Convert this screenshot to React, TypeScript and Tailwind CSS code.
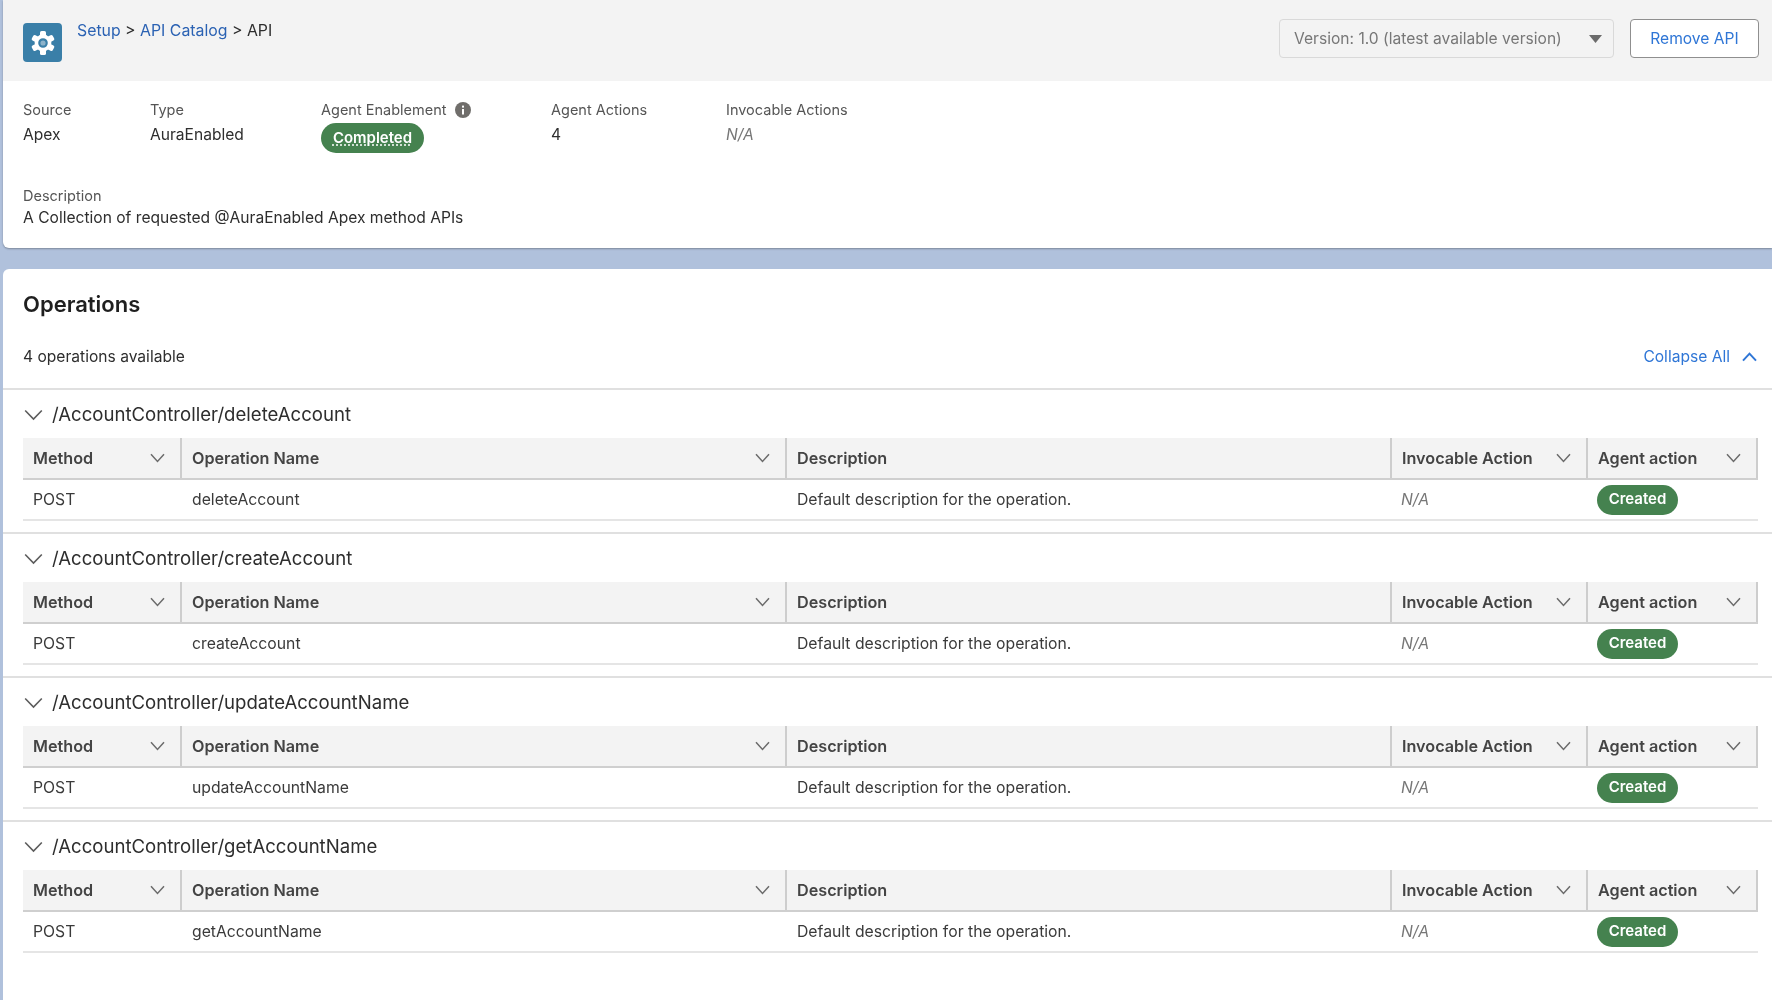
import React from 'react';

const operations = ['deleteAccount', 'createAccount', 'updateAccountName', 'getAccountName'];

function GearIcon() {
  return (
    <svg width="26" height="26" viewBox="0 0 26 26" fill="none">
      <circle cx="13" cy="13" r="8.4" fill="#fff" />
      {[0, 60, 120, 180, 240, 300].map(angle => (
        <rect key={angle} x="10" y="1" width="6" height="6" rx="1.6" fill="#fff" transform={`rotate(${angle} 13 13)`} />
      ))}
      <circle cx="13" cy="13" r="3.7" fill="#8db3ca" stroke="#3a7fa8" strokeWidth="2.2" />
    </svg>
  );
}

function Chevron({ size = 'sort' }: { size?: 'sort' | 'section' }) {
  if (size === 'section') {
    return (
      <svg width="19" height="12" viewBox="0 0 19 12" fill="none" stroke="#5c5c5c" strokeWidth="1.6">
        <path d="M1.2 1.5 9.5 10l8.3-8.5" />
      </svg>
    );
  }
  return (
    <svg width="15" height="10" viewBox="0 0 15 10" fill="none" stroke="#6b6b6b" strokeWidth="1.5">
      <path d="M1 1.2 7.5 8.4 14 1.2" />
    </svg>
  );
}

function HeaderCell({ label, width, sort = true }: { label: string; width: string; sort?: boolean }) {
  return (
    <div className={`${width} h-full flex items-center justify-between pl-[10px] pr-[15px] border-r-2 border-[#cdcdcd]`}>
      <span className="text-[16.2px] font-semibold text-[#444444]">{label}</span>
      {sort && <Chevron />}
    </div>
  );
}

function OperationSection({ name }: { name: string }) {
  return (
    <div className="border-t-2 border-[#e0e0e0] pb-[11px]">
      <div className="h-[48px] pt-[2px] flex items-center pl-[21px]">
        <Chevron size="section" />
        <span className="ml-[9px] text-[18.6px] text-[#2e2e2e]">/AccountController/{name}</span>
      </div>
      <div className="ml-[20px] w-[1735px]">
        <div className="flex h-[42px] bg-[#f3f3f3] border-b-2 border-[#cfcfcf]">
          <HeaderCell label="Method" width="w-[159px]" />
          <HeaderCell label="Operation Name" width="w-[605px]" />
          <HeaderCell label="Description" width="w-[605px]" sort={false} />
          <HeaderCell label="Invocable Action" width="w-[196px]" />
          <HeaderCell label="Agent action" width="w-[170px]" />
        </div>
        <div className="flex h-[41px] items-center border-b-2 border-[#e5e5e5] text-[15.75px] text-[#3a3a3a]">
          <div className="w-[159px] pl-[10px]">POST</div>
          <div className="w-[605px] pl-[10px]">{name}</div>
          <div className="w-[605px] pl-[10px]">Default description for the operation.</div>
          <div className="w-[196px] pl-[9px] italic text-[#777777]">N/A</div>
          <div className="w-[170px] pl-[9px]">
            <span className="inline-flex h-[30px] w-[81px] items-center justify-center rounded-full bg-[#45824f] text-[15px] font-semibold text-white">
              Created
            </span>
          </div>
        </div>
      </div>
    </div>
  );
}

function Label({ children }: { children: React.ReactNode }) {
  return <div className="text-[14.5px] text-[#555555] h-[20px] leading-[20px]">{children}</div>;
}

export default function App() {
  return (
    <div className="h-[1000px] overflow-hidden bg-[#b0c1dc] pl-[3px] font-['Inter',sans-serif] text-[15.6px] text-[#2e2e2e] blur-[0.4px]">
      {/* Top card */}
      <div className="h-[248px] bg-white rounded-bl-md shadow-[0_1px_2px_rgba(0,0,0,0.3)]">
        <div className="h-[81px] bg-[#f3f3f3] flex justify-between pl-[20px] pr-[13px]">
          <div className="flex items-start pt-[23px]">
            <div className="w-[39px] h-[39px] rounded-[4px] bg-[#3a7fa8] flex items-center justify-center">
              <GearIcon />
            </div>
            <div className="ml-[15px] -mt-[4px] text-[15.85px]">
              <a className="text-[#2b62b3]">Setup</a> &gt; <a className="text-[#2b62b3]">API Catalog</a> &gt; API
            </div>
          </div>
          <div className="flex items-start pt-[19px] gap-[16px]">
            <div className="w-[335px] h-[39px] rounded-[4px] border border-[#d9d9d9] bg-[#f3f3f3] flex items-center justify-between pl-[14px] pr-[11px] text-[#777777]">
              <span>Version: 1.0 (latest available version)</span>
              <svg width="13" height="8" viewBox="0 0 13 8"><path d="M0 0h13L6.5 8z" fill="#6b6b6b" /></svg>
            </div>
            <button className="w-[129px] h-[39px] rounded-[4px] border border-[#8f8f8f] bg-white text-[#2f76d6]">Remove API</button>
          </div>
        </div>
        <div className="flex pl-[20px] pt-[19px]">
          <div className="w-[127px]">
            <Label>Source</Label>
            <div className="mt-[3px] leading-[24px]">Apex</div>
          </div>
          <div className="w-[171px]">
            <Label>Type</Label>
            <div className="mt-[3px] leading-[24px]">AuraEnabled</div>
          </div>
          <div className="w-[230px]">
            <div className="text-[14.5px] text-[#555555] h-[20px] leading-[20px] flex items-center gap-[9px]">
              Agent Enablement
              <svg width="16" height="16" viewBox="0 0 16 16">
                <circle cx="8" cy="8" r="8" fill="#706e6b" />
                <rect x="7" y="7" width="2" height="5.5" fill="#fff" />
                <rect x="7" y="3.6" width="2" height="2" fill="#fff" />
              </svg>
            </div>
            <span className="mt-[3px] inline-flex h-[30px] w-[103px] items-center justify-center rounded-full bg-[#45824f] text-[15px] font-semibold text-white underline decoration-dotted underline-offset-2">
              Completed
            </span>
          </div>
          <div className="w-[175px]">
            <Label>Agent Actions</Label>
            <div className="mt-[3px] leading-[24px]">4</div>
          </div>
          <div>
            <Label>Invocable Actions</Label>
            <div className="mt-[3px] leading-[24px] italic text-[#777777]">N/A</div>
          </div>
        </div>
        <div className="pl-[20px] mt-[33px]">
          <Label>Description</Label>
          <div className="leading-[24px]">A Collection of requested @AuraEnabled Apex method APIs</div>
        </div>
      </div>

      {/* Operations card */}
      <div className="mt-[21px] h-[731px] bg-white rounded-tl-md">
        <div className="h-[119px] pl-[20px] pr-[15px]">
          <h2 className="pt-[20px] text-[22px] leading-[30px] font-semibold text-[#1f1f1f]">Operations</h2>
          <div className="mt-[26px] flex items-center justify-between leading-[24px]">
            <span>4 operations available</span>
            <span className="flex items-center gap-[12px] text-[#2f76d6]">
              Collapse All
              <svg width="15" height="10" viewBox="0 0 15 10" fill="none" stroke="#2f76d6" strokeWidth="2">
                <path d="M1 8.6 7.5 1.6 14 8.6" />
              </svg>
            </span>
          </div>
        </div>
        {operations.map(name => (
          <OperationSection key={name} name={name} />
        ))}
      </div>
    </div>
  );
}
